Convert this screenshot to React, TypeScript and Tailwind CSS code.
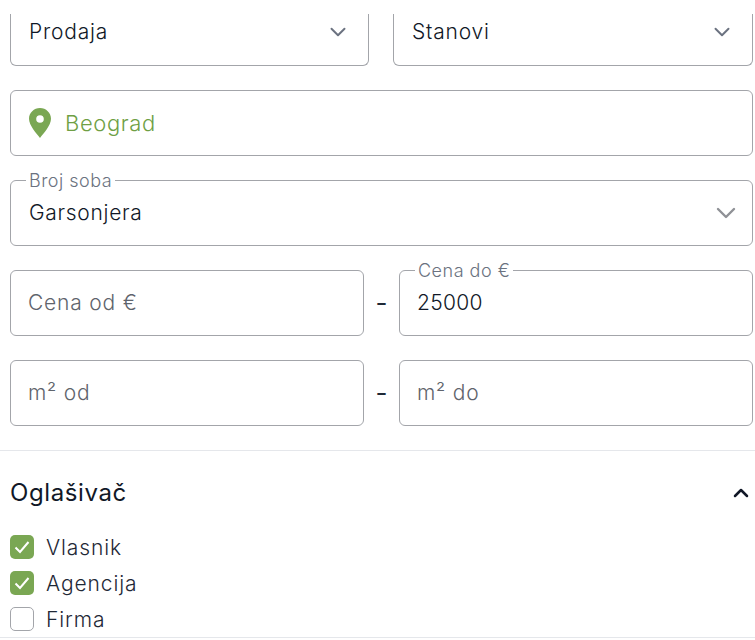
import React from "react";
import { ChevronDown, ChevronUp } from "lucide-react";

// ─── small pieces ─────────────────────────────────────────────────────────────

function Legend({ children }: { children: React.ReactNode }) {
  return (
    <span className="absolute -top-[9px] left-[15px] bg-white px-[3px] text-[18px] leading-[18px] font-light text-[#6b7280] tracking-[0.5px]">
      {children}
    </span>
  );
}

function Field({
  placeholder,
  value,
  legend,
}: {
  placeholder?: string;
  value?: string;
  legend?: string;
}) {
  return (
    <div className="relative flex-1 h-[66px] flex items-center pl-[17px] rounded-[6px] border border-[#a3a5aa]">
      {legend && <Legend>{legend}</Legend>}
      {value ? (
        <span className="text-[21px] font-light text-[#111827] tracking-[0.3px]">{value}</span>
      ) : (
        <span className="text-[21px] font-light text-[#5f646c] tracking-[0.8px]">{placeholder}</span>
      )}
    </div>
  );
}

function Check({ label, checked }: { label: string; checked?: boolean }) {
  return (
    <div className="flex items-center gap-3 h-6">
      {checked ? (
        <span className="w-6 h-6 rounded-[5px] bg-[#7aa753] flex items-center justify-center">
          <svg width="16" height="14" viewBox="0 0 16 14" fill="none">
            <path d="M1.5 7.5 L6 12 L14.5 2" stroke="#fff" strokeWidth="2" />
          </svg>
        </span>
      ) : (
        <span className="w-6 h-6 rounded-[5px] border border-[#a3a5aa] bg-white" />
      )}
      <span className="pt-[2px] text-[21px] font-light text-[#1f2937] tracking-[0.9px]">{label}</span>
    </div>
  );
}

function Dash() {
  return <span className="w-[35px] text-center text-[26px] leading-none font-normal text-[#1f2937]">-</span>;
}

// ─── page ─────────────────────────────────────────────────────────────────────

export default function App() {
  return (
    <div className="w-[755px] h-[640px] overflow-hidden bg-white font-['Inter','Liberation_Sans',sans-serif]">
      <div className="pl-[10px] pr-[2px] pt-[14px]">
        {/* top selects, scrolled partly out of view */}
        <div className="flex gap-6 h-[52px] overflow-hidden">
          <div className="w-[359px] shrink-0 h-[52px] flex items-center justify-between pl-[18px] pr-[17px] pb-[15px] rounded-b-[6px] border border-t-0 border-[#a3a5aa]">
            <span className="text-[21px] font-light text-[#111827] tracking-[0.8px]">Prodaja</span>
            <ChevronDown size={26} strokeWidth={1.8} className="text-[#6b7280]" />
          </div>
          <div className="flex-1 h-[52px] flex items-center justify-between pl-[18px] pr-[17px] pb-[15px] rounded-b-[6px] border border-t-0 border-[#a3a5aa]">
            <span className="text-[21px] font-light text-[#111827] tracking-[0.8px]">Stanovi</span>
            <ChevronDown size={26} strokeWidth={1.8} className="text-[#6b7280]" />
          </div>
        </div>

        {/* location */}
        <div className="mt-6 h-[66px] flex items-center pl-[18px] gap-[14px] rounded-[6px] border border-[#a3a5aa]">
          <svg width="22" height="30" viewBox="0 0 22 30">
            <path
              fillRule="evenodd"
              d="M11 0C5 0 0 4.8 0 10.8 0 17.5 7.5 25.5 11 30c3.5-4.5 11-12.5 11-19.2C22 4.8 17 0 11 0Zm0 7.2a3.8 3.8 0 1 1 0 7.6 3.8 3.8 0 0 1 0-7.6Z"
              fill="#7aa753"
            />
          </svg>
          <span className="text-[22px] font-light text-[#6f9f45] tracking-[0.6px]">Beograd</span>
        </div>

        {/* rooms */}
        <div className="relative mt-6 h-[66px] flex items-center justify-between pl-[18px] pr-[10px] rounded-[6px] border border-[#a3a5aa]">
          <Legend>Broj soba</Legend>
          <span className="text-[21px] font-light text-[#111827] tracking-[0.7px]">Garsonjera</span>
          <ChevronDown size={32} strokeWidth={1.8} className="text-[#8f9196]" />
        </div>

        {/* price */}
        <div className="mt-6 flex items-center">
          <Field placeholder="Cena od €" />
          <Dash />
          <Field legend="Cena do €" value="25000" />
        </div>

        {/* area */}
        <div className="mt-6 flex items-center">
          <Field placeholder="m² od" />
          <Dash />
          <Field placeholder="m² do" />
        </div>
      </div>

      <div className="mt-6 border-t border-[#e5e7eb] pl-[10px] pr-[2px]">
        <div className="mt-[28px] h-[28px] flex items-center justify-between">
          <span className="text-[24px] font-normal text-[#111827] tracking-[0.6px]">Oglašivač</span>
          <ChevronUp size={24} strokeWidth={2.5} className="text-[#111827]" />
        </div>
        <div className="mt-[28px] flex flex-col gap-3">
          <Check label="Vlasnik" checked />
          <Check label="Agencija" checked />
          <Check label="Firma" />
        </div>
      </div>
      <div className="mt-[6px] border-t border-[#e5e7eb]" />
    </div>
  );
}
